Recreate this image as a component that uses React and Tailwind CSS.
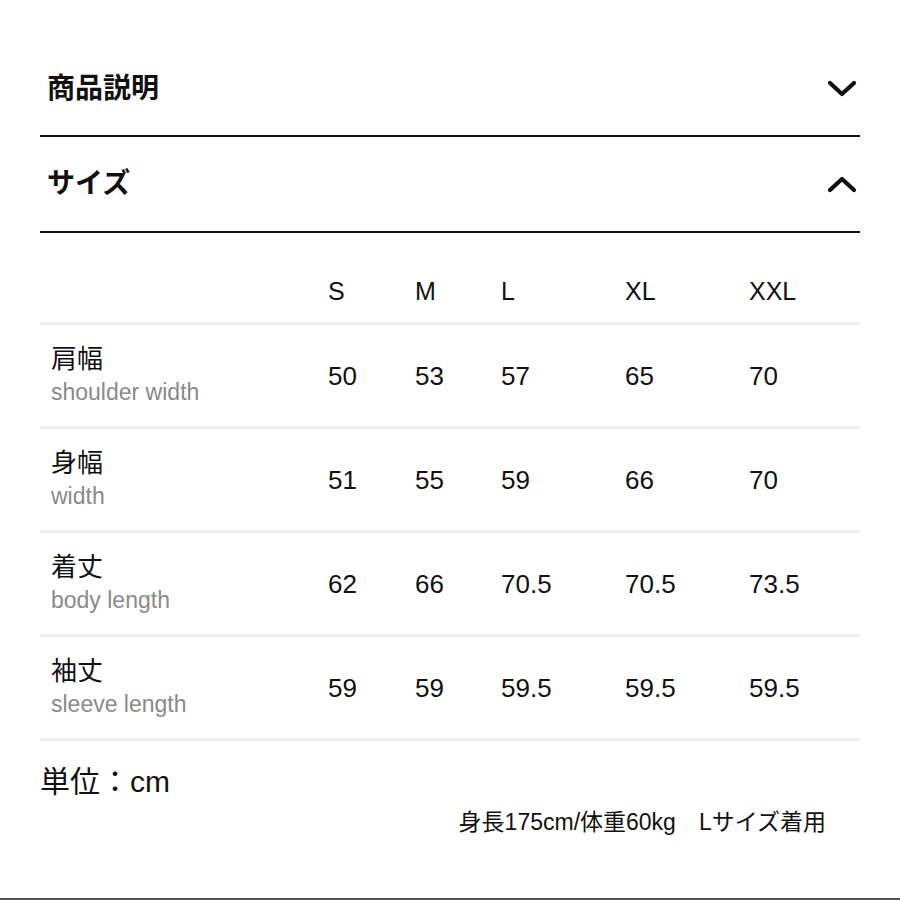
import React from "react";

const sizes = [
  { label: "S", w: "w-[87px]" },
  { label: "M", w: "w-[86px]" },
  { label: "L", w: "w-[124px]" },
  { label: "XL", w: "w-[124px]" },
  { label: "XXL", w: "w-[100px]" },
];

const rows = [
  { jp: "肩幅", en: "shoulder width", values: ["50", "53", "57", "65", "70"] },
  { jp: "身幅", en: "width", values: ["51", "55", "59", "66", "70"] },
  { jp: "着丈", en: "body length", values: ["62", "66", "70.5", "70.5", "73.5"] },
  { jp: "袖丈", en: "sleeve length", values: ["59", "59", "59.5", "59.5", "59.5"] },
];

function Chevron({ up }) {
  return (
    <svg width="30" height="20" viewBox="0 0 30 20" className="mr-[3px]">
      <polyline
        points={up ? "3,16 15,5 27,16" : "3,4 15,15 27,4"}
        fill="none"
        stroke="#111"
        strokeWidth="4.2"
        strokeLinecap="round"
        strokeLinejoin="round"
      />
    </svg>
  );
}

export default function App() {
  const font = { fontFamily: '"Liberation Sans", "Noto Sans CJK JP", sans-serif' };

  return (
    <div className="w-[900px] h-[900px] bg-white flex flex-col text-[#111]" style={font}>
      <div className="flex-1 px-[40px] pt-[39px]">
        <div className="h-[98px] flex items-center justify-between border-b-2 border-[#111] pl-[7px] pt-[3px]">
          <span className="text-[28px] font-bold">商品説明</span>
          <Chevron />
        </div>
        <div className="h-[96px] flex items-center justify-between border-b-2 border-[#111] pl-[7px]">
          <span className="text-[28px] font-bold">サイズ</span>
          <Chevron up />
        </div>

        <div className="h-[92px] flex items-end pb-[16px] border-b-[3px] border-[#efefef] pl-[11px]">
          <div className="w-[277px]"></div>
          {sizes.map((s) => (
            <div key={s.label} className={`${s.w} text-[25px] leading-[30px]`}>
              {s.label}
            </div>
          ))}
        </div>

        {rows.map((r) => (
          <div
            key={r.jp}
            className="h-[104px] flex items-center border-b-[3px] border-[#efefef] pl-[11px]"
          >
            <div className="w-[277px] flex flex-col pb-[2px]">
              <span className="text-[26px] leading-[34px]">{r.jp}</span>
              <span className="text-[23px] leading-[32px] text-[#8a8a8a]">{r.en}</span>
            </div>
            {r.values.map((v, i) => (
              <div key={i} className={`${sizes[i].w} text-[26px] leading-[30px]`}>
                {v}
              </div>
            ))}
          </div>
        ))}

        <div className="mt-[22px] text-[30px] leading-[38px]">単位：cm</div>
        <div className="mt-[6px] flex justify-end pr-[34px]">
          <span className="text-[23px] leading-[30px]">身長175cm/体重60kg　Lサイズ着用</span>
        </div>
      </div>
      <div className="h-[2px] bg-[#555]"></div>
    </div>
  );
}
